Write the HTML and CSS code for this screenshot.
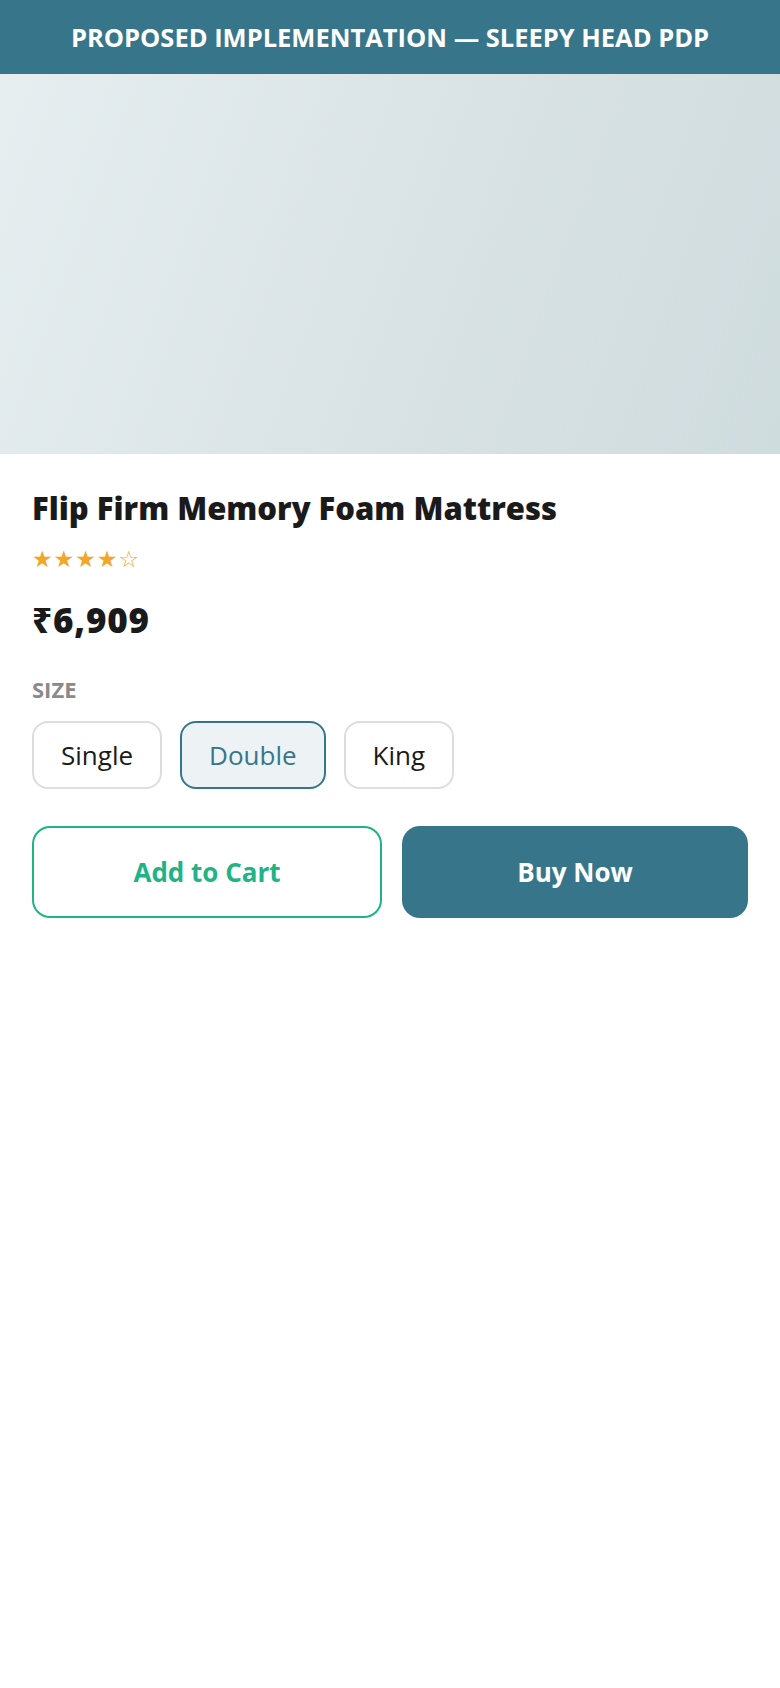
FILE: index.html
```html
<!DOCTYPE html>
<html lang="en">
<head>
<meta charset="utf-8">
<title>Sleepy Head PDP</title>
<link rel="stylesheet" href="styles.css">
</head>
<body>
<header class="topbar">PROPOSED IMPLEMENTATION — SLEEPY HEAD PDP</header>
<div class="hero"></div>
<main class="details">
  <h1 class="title">Flip Firm Memory Foam Mattress</h1>
  <div class="stars">★★★★☆</div>
  <div class="price">₹6,909</div>
  <div class="size-label">SIZE</div>
  <div class="sizes">
    <button class="size">Single</button>
    <button class="size selected">Double</button>
    <button class="size">King</button>
  </div>
  <div class="actions">
    <button class="btn cart">Add to Cart</button>
    <button class="btn buy">Buy Now</button>
  </div>
</main>
</body>
</html>
```
FILE: styles.css
```css
* { box-sizing: border-box; }
html, body { margin: 0; padding: 0; background: #fff; }
body { font-family: "Open Sans", "Noto Sans", sans-serif; color: #1a1a1a; }

.topbar {
  height: 74px;
  background: #37768a;
  color: #fff;
  font-weight: 700;
  font-size: 25.5px;
  display: flex;
  align-items: center;
  justify-content: center;
}

.hero {
  height: 380px;
  background: linear-gradient(110deg, #e6eef0 0%, #dae3e6 50%, #cfdcde 100%);
}

.details {
  padding: 34px 32px 0;
  display: flex;
  flex-direction: column;
}

.title {
  margin: 0;
  font-size: 31px;
  line-height: 40px;
  font-weight: 800;
  color: #1a1a1a;
}

.stars {
  margin-top: 17px;
  font-family: "DejaVu Sans", sans-serif;
  font-size: 23px;
  line-height: 28px;
  color: #f2a62a;
  letter-spacing: 1px;
}

.price {
  margin-top: 26px;
  font-size: 35px;
  line-height: 42px;
  font-weight: 800;
  letter-spacing: 0.8px;
}

.size-label {
  margin-top: 35px;
  font-size: 22px;
  line-height: 26px;
  font-weight: 700;
  color: #8a8a8a;
}

.sizes {
  margin-top: 19px;
  display: flex;
  gap: 18px;
}

.size {
  height: 68px;
  padding: 0 27px;
  border: 2px solid #dddddd;
  border-radius: 16px;
  background: #fff;
  font-family: inherit;
  font-size: 26px;
  color: #1a1a1a;
}

.size.selected {
  border-color: #37768a;
  background: #edf3f5;
  color: #37768a;
}

.actions {
  margin-top: 37px;
  display: flex;
  gap: 20px;
}

.btn {
  height: 92px;
  border-radius: 18px;
  font-family: inherit;
  font-size: 26px;
  font-weight: 700;
}

.cart {
  flex: 0 0 350px;
  background: #fff;
  border: 2px solid #1fb386;
  color: #1fb386;
}

.buy {
  flex: 1;
  background: #37768a;
  border: 0;
  color: #fff;
}
```
